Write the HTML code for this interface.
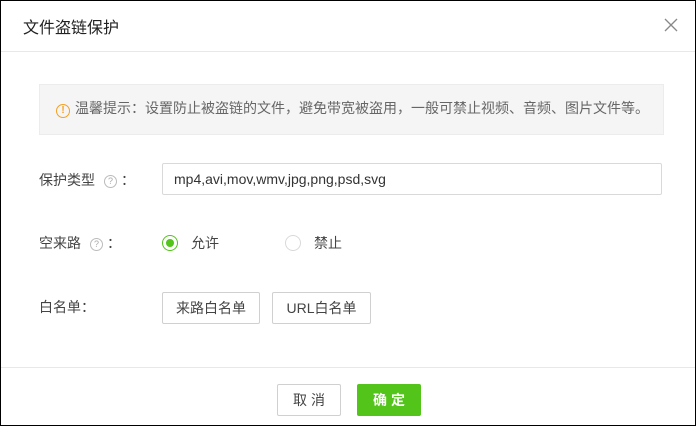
<!DOCTYPE html>
<html><head><meta charset="utf-8"><style>
*{box-sizing:border-box;margin:0;padding:0}
body{width:696px;height:426px;background:#fff;font-family:"Liberation Sans","Noto Sans CJK SC",sans-serif;position:relative;overflow:hidden;color:#333}
.frame{position:absolute;left:0;top:0;width:696px;height:426px;border:1px solid #000}
.abs{position:absolute}
.title{left:23px;top:14px;font-size:16px;color:#222}
.hl{left:1px;right:1px;height:1px;background:#e8e8e8}
.notice{left:39px;top:84px;width:625px;height:51px;background:#f5f5f5;border:1px solid #ececec;font-size:14px;color:#666;padding:0 0 0 16px;line-height:47px;white-space:nowrap}
.lbl{font-size:14px;color:#444}
.q{display:inline-block;width:13px;height:13px;border:1px solid #bbb;border-radius:50%;font-size:9px;line-height:11px;text-align:center;color:#aaa;vertical-align:1px;margin:0 4px 0 9px}
.input{left:162px;top:163px;width:500px;height:32px;border:1px solid #d9d9d9;border-radius:2px;font-size:14px;line-height:30px;padding-left:11px;color:#333}
.btn{border:1px solid #d0d0d0;border-radius:2px;font-size:14px;text-align:center;color:#444;background:#fff}
</style></head><body>
<div class="abs title">文件盗链保护</div>
<div class="abs" style="left:664px;top:18px;width:14px;height:14px">
<svg width="14" height="14"><path d="M1 1L13 13M13 1L1 13" stroke="#888" stroke-width="1.3"/></svg></div>
<div class="abs hl" style="top:51px"></div>
<div class="abs notice"><span style="display:inline-block;width:14px;height:14px;border:1.3px solid #f5a020;border-radius:50%;color:#f5a020;font-size:10px;line-height:12px;text-align:center;font-weight:bold;vertical-align:0px;margin-right:5px">!</span>温馨提示：设置防止被盗链的文件，避免带宽被盗用，一般可禁止视频、音频、图片文件等。</div>
<div class="abs lbl" style="left:39px;top:170px">保护类型<span class="q">?</span>：</div>
<div class="abs input">mp4,avi,mov,wmv,jpg,png,psd,svg</div>
<div class="abs lbl" style="left:39px;top:233px">空来路<span class="q">?</span>：</div>
<div class="abs" style="left:162px;top:235px;width:16px;height:16px;border:1px solid #52c41a;border-radius:50%"><div style="position:absolute;left:3px;top:3px;width:8px;height:8px;border-radius:50%;background:#52c41a"></div></div>
<div class="abs lbl" style="left:191px;top:233px">允许</div>
<div class="abs" style="left:285px;top:235px;width:16px;height:16px;border:1px solid #d9d9d9;border-radius:50%"></div>
<div class="abs lbl" style="left:314px;top:233px">禁止</div>
<div class="abs lbl" style="left:39px;top:297px">白名单：</div>
<div class="abs btn" style="left:162px;top:292px;width:98px;height:32px;line-height:30px">来路白名单</div>
<div class="abs btn" style="left:272px;top:292px;width:99px;height:32px;line-height:30px">URL白名单</div>
<div class="abs hl" style="top:367px"></div>
<div class="abs btn" style="left:277px;top:384px;width:64px;height:32px;line-height:30px;letter-spacing:4px;text-indent:4px">取消</div>
<div class="abs btn" style="left:357px;top:384px;width:64px;height:32px;line-height:32px;background:#52c41a;border:none;color:#fff;font-weight:bold;letter-spacing:4px;text-indent:4px">确定</div>
<div class="frame"></div>
</body></html>
